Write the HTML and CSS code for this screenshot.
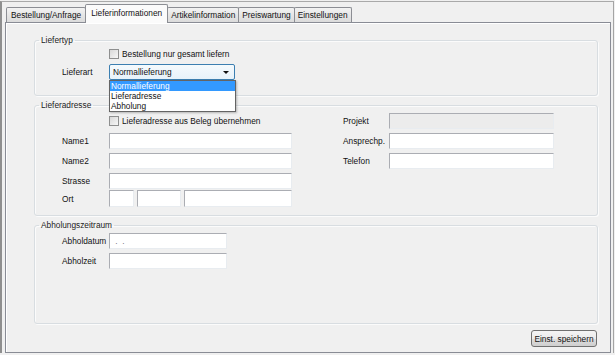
FILE: index.html
```html
<!DOCTYPE html>
<html lang="de">
<head>
    <meta charset="UTF-8">
    <title>Lieferinformationen</title>
    <link rel="stylesheet" href="styles.css">
</head>
<body>
    <div class="window">
        <div class="tabs">
            <div class="tab">Bestellung/Anfrage</div>
            <div class="tab active">Lieferinformationen</div>
            <div class="tab">Artikelinformation</div>
            <div class="tab">Preiswartung</div>
            <div class="tab">Einstellungen</div>
        </div>

        <div class="panel">
            <fieldset class="group group-typ">
                <legend>Liefertyp</legend>
                <div class="fields">
                    <div class="check-row"><span class="check"></span>Bestellung nur gesamt liefern</div>
                    <div class="row row-combo">
                        <span class="lbl">Lieferart</span>
                        <div class="combo">
                            <div class="combo-box">Normallieferung<span class="arrow"></span></div>
                            <ul class="combo-list">
                                <li class="sel">Normallieferung</li>
                                <li>Lieferadresse</li>
                                <li>Abholung</li>
                            </ul>
                        </div>
                    </div>
                </div>
            </fieldset>

            <fieldset class="group group-adr">
                <legend>Lieferadresse</legend>
                <div class="fields cols">
                    <div class="col-left">
                        <div class="check-row"><span class="check"></span>Lieferadresse aus Beleg übernehmen</div>
                        <div class="row"><span class="lbl">Name1</span><input class="field w-full" type="text"></div>
                        <div class="row"><span class="lbl">Name2</span><input class="field w-full" type="text"></div>
                        <div class="row"><span class="lbl">Strasse</span><input class="field w-full" type="text"></div>
                        <div class="row row-ort">
                            <span class="lbl">Ort</span>
                            <input class="field w-land" type="text">
                            <input class="field w-plz" type="text">
                            <input class="field w-ort" type="text">
                        </div>
                    </div>
                    <div class="col-right">
                        <div class="row first"><span class="lbl">Projekt</span><input class="field w-right disabled" type="text" disabled></div>
                        <div class="row"><span class="lbl">Ansprechp.</span><input class="field w-right" type="text"></div>
                        <div class="row"><span class="lbl">Telefon</span><input class="field w-right" type="text"></div>
                    </div>
                </div>
            </fieldset>

            <fieldset class="group group-abh">
                <legend>Abholungszeitraum</legend>
                <div class="fields">
                    <div class="row first"><span class="lbl">Abholdatum</span><input class="field w-date date" type="text" value=" .  ."></div>
                    <div class="row"><span class="lbl">Abholzeit</span><input class="field w-date" type="text"></div>
                </div>
            </fieldset>

            <div class="actions">
                <button class="btn">Einst. speichern</button>
            </div>
        </div>
    </div>
</body>
</html>
```

FILE: styles.css
```css
body {
    margin: 0;
    padding-top: 1px;
    background: #f0f0f0;
    font-family: "Liberation Sans", Arial, sans-serif;
    font-size: 8.3px;
    color: #111;
}
.window {
    width: 614px;
    box-sizing: border-box;
    border-top: 1px solid #a9a9a9;
    border-left: 2px solid #8f8f8f;
    border-right: 1px solid #a4a4a4;
    padding: 0 2px 0 3px;
}

/* Reiter */
.tabs {
    display: flex;
    align-items: flex-end;
    height: 20px;
    padding-left: 1px;
}
.tab {
    height: 15px;
    box-sizing: border-box;
    border: 1px solid #8c8e94;
    border-bottom: none;
    border-radius: 2px 2px 0 0;
    margin-left: -1px;
    padding: 0 3px;
    line-height: 14px;
    white-space: nowrap;
    background: linear-gradient(#f3f3f3, #e6e6e6 50%, #dbdbdb);
}
.tab:first-child {
    margin-left: 0;
    padding: 0 4px;
}
.tab.active {
    position: relative;
    z-index: 1;
    height: 19px;
    margin-bottom: -1px;
    padding: 0 5px;
    line-height: 16px;
    background: #fbfbfb;
}

.panel {
    border: 1px solid #898c95;
    box-shadow: inset 1px 1px #fff;
    background: #f0f0f0;
    padding: 12px 12px 5px 28px;
}

/* Gruppen */
.group {
    margin: 0 0 4px;
    padding: 0 4px 15px;
    min-width: 0;
    border: 1px solid #d8dde1;
    border-radius: 3px;
    box-shadow: inset 1px 1px #fbfbfb, 1px 1px #fbfbfb;
}
.group legend {
    padding: 0 2px;
    line-height: 11px;
    color: #222;
}
.group-adr {
    padding-bottom: 8px;
}
.group-adr .fields,
.group-abh .fields {
    padding-top: 2px;
}
.group-abh {
    padding-bottom: 54px;
}
.fields {
    padding-left: 23px;
}
.cols {
    display: flex;
}
.col-left {
    width: 230px;
}
.col-right {
    width: 211px;
    margin-left: 51px;
}

.row {
    display: flex;
    align-items: center;
    height: 16px;
    margin-top: 4px;
}
.row.first {
    margin-top: 0;
}
.row-combo {
    margin-top: 3px;
}
.row-ort {
    margin-top: 1px;
    height: 17px;
    gap: 3px;
}
.row-ort .lbl {
    margin-right: -3px;
}
.lbl {
    width: 47px;
    flex: none;
    white-space: nowrap;
}
.col-right .lbl {
    width: 46px;
}

.check-row {
    display: flex;
    align-items: center;
    height: 15px;
    padding-left: 47px;
}
.group-adr .check-row {
    height: 16px;
}
.check {
    width: 8px;
    height: 8px;
    margin-right: 3px;
    border: 1px solid #8e8f8f;
    background: linear-gradient(135deg, #d8d8d8, #f7f7f7);
}

/* Eingabefelder */
.field {
    height: 16px;
    box-sizing: border-box;
    margin: 0;
    padding: 0 3px;
    border: 1px solid;
    border-color: #abadb3 #e8ecf0 #e8ecf0 #abadb3;
    background: #fff;
    font: inherit;
    outline: none;
}
.field.disabled {
    background: #ececec;
}
.date {
    color: #777;
}
.w-full { width: 183px; }
.w-land { width: 25px; height: 17px; }
.w-plz { width: 44px; height: 17px; }
.w-ort { width: 108px; height: 17px; }
.w-right { width: 165px; }
.w-date { width: 118px; }

/* Auswahlliste */
.combo {
    position: relative;
}
.combo-box {
    position: relative;
    width: 126px;
    height: 16px;
    box-sizing: border-box;
    padding-left: 3px;
    line-height: 14px;
    border: 1px solid #3c7fb1;
    border-radius: 2px;
    background: linear-gradient(#f5fafd, #e7f2fa);
}
.arrow {
    position: absolute;
    right: 5px;
    top: 6px;
    border-left: 3px solid transparent;
    border-right: 3px solid transparent;
    border-top: 3px solid #111;
}
.combo-list {
    position: absolute;
    z-index: 2;
    top: 16px;
    left: 0;
    width: 127px;
    box-sizing: border-box;
    margin: 0;
    padding: 0;
    list-style: none;
    background: #fff;
    border: 1px solid #646464;
    box-shadow: 1px 1px 2px rgba(0, 0, 0, 0.25);
}
.combo-list li {
    height: 10px;
    line-height: 10px;
    padding-left: 1px;
}
.combo-list li.sel {
    background: #3399ff;
    color: #fff;
}

.actions {
    display: flex;
    justify-content: flex-end;
    margin-top: 6px;
}
.btn {
    width: 66px;
    height: 17px;
    margin: 0 1px 0 0;
    padding: 0;
    font: inherit;
    color: #111;
    border: 1px solid #707070;
    border-radius: 3px;
    background: linear-gradient(#f4f4f4, #ebebeb 50%, #dddddd 50%, #cfcfcf);
}
```
